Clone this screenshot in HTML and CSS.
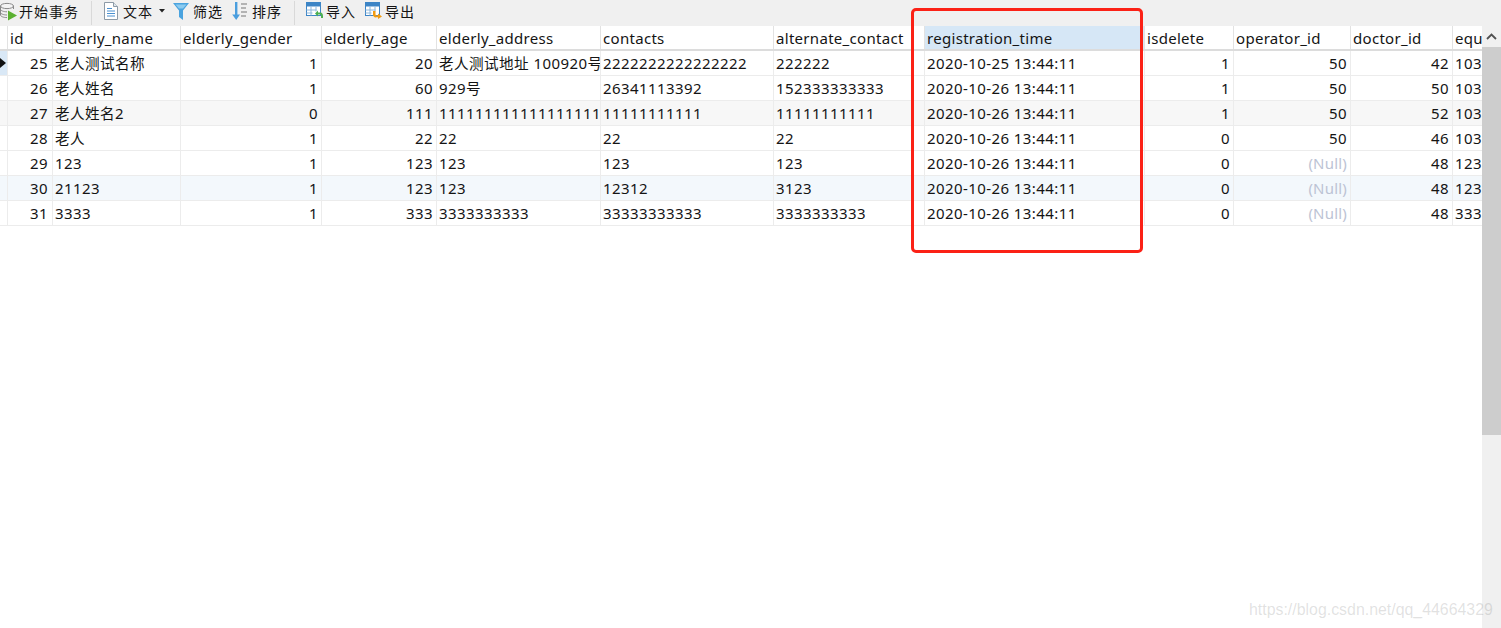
FILE: index.html
```html
<!DOCTYPE html>
<html lang="zh">
<head>
<meta charset="utf-8">
<title>elderly</title>
<link rel="stylesheet" href="styles.css">
</head>
<body>
<div class="toolbar">
  <div class="tool t-begin">
    <svg class="ic" width="18" height="20" viewBox="0 0 18 20"><ellipse cx="7" cy="5" rx="6.5" ry="2.6" fill="#f4f4f4" stroke="#8a8a8a"/><path d="M.5 5v9c0 1.4 3 2.6 6.500 2.600M13.500 5v3M.5 8.200c0 1.400 3 2.600 6.500 2.600M.5 11.400c0 1.400 3 2.600 6.500 2.600" fill="none" stroke="#8a8a8a"/><path d="M8 9.500l9 5-9 5z" fill="#5bb030"/></svg>
    <span>开始事务</span>
  </div>
  <div class="sep sep-a"></div>
  <div class="tool t-text">
    <svg class="ic" width="14" height="18" viewBox="0 0 14 18"><path d="M.5.5h9l4 4v13H.5z" fill="#fff" stroke="#8d9aa6"/><path d="M9.500.5v4h4" fill="#dfe6ec" stroke="#8d9aa6"/><path d="M3 6.500h5M3 9h8M3 11.500h8M3 14h8" stroke="#4a90d0"/></svg>
    <span>文本</span>
    <svg class="caret" width="6" height="4" viewBox="0 0 6 4"><path d="M0 0h6L3 3.500z" fill="#222"/></svg>
  </div>
  <div class="tool t-filter">
    <svg class="ic" width="16" height="18" viewBox="0 0 16 18"><path d="M0 1h16l-6 7.500V18l-4-3V8.500z" fill="#4aa3df"/><path d="M2.500 2.500h11L10 6.500H6z" fill="#8ccbf0"/></svg>
    <span>筛选</span>
  </div>
  <div class="tool t-sort">
    <svg class="ic" width="16" height="18" viewBox="0 0 16 18"><path d="M4 0h2.400v12.500H9L5.200 18 1.200 12.500H4z" fill="#4a9ede"/><path d="M10 2h6M10 6h5M10 10h6M10 14h5" stroke="#777" stroke-width="1.200"/></svg>
    <span>排序</span>
  </div>
  <div class="sep sep-b"></div>
  <div class="tool t-import">
    <svg class="ic" width="17" height="17" viewBox="0 0 17 17"><rect x=".5" y=".5" width="14" height="13" fill="#fff" stroke="#3d85c6"/><path d="M.5 1h14v3.500H.5z" fill="#3d85c6"/><path d="M5 4.500v9M10 4.500v5M.5 8h10M.5 11h6" stroke="#8fb8dc"/><path d="M9 11.500l3-3v2h2.500c1.500 0 2.500 1.500 2.500 3.500v2h-2v-1.800c0-1-.5-1.700-1.500-1.700H12v2z" fill="#4caf50"/></svg>
    <span>导入</span>
  </div>
  <div class="tool t-export">
    <svg class="ic" width="17" height="17" viewBox="0 0 17 17"><rect x=".5" y=".5" width="14" height="13" fill="#fff" stroke="#3d85c6"/><path d="M.5 1h14v3.500H.5z" fill="#3d85c6"/><path d="M5 4.500v9M10 4.500v5M.5 8h10M.5 11h6" stroke="#8fb8dc"/><path d="M8 9h2.500v3c0 1 .5 1.500 1.500 1.500h1v-2l4 3-4 2.500v-1.700h-1.500C9.500 15.800 8 14.500 8 12.500z" fill="#f39c12"/></svg>
    <span>导出</span>
  </div>
</div>

<div class="main">
  <div class="grid">
    <div class="row head">
      <div class="c gut"></div>
      <div class="c">id</div>
      <div class="c">elderly_name</div>
      <div class="c">elderly_gender</div>
      <div class="c">elderly_age</div>
      <div class="c">elderly_address</div>
      <div class="c">contacts</div>
      <div class="c">alternate_contact</div>
      <div class="c sel">registration_time</div>
      <div class="c">isdelete</div>
      <div class="c">operator_id</div>
      <div class="c">doctor_id</div>
      <div class="c last">equ</div>
    </div>

    <div class="row">
      <div class="c gut cur"><svg width="6" height="10" viewBox="0 0 6 10"><path d="M0 0l6 5-6 5z" fill="#111"/></svg></div>
      <div class="c n nid">25</div>
      <div class="c"><span class="cjk">老人测试名称</span></div>
      <div class="c n">1</div>
      <div class="c n">20</div>
      <div class="c"><span class="cjk">老人测试地址</span> 100920<span class="cjk">号</span></div>
      <div class="c">2222222222222222</div>
      <div class="c">222222</div>
      <div class="c">2020-10-25 13:44:11</div>
      <div class="c n">1</div>
      <div class="c n">50</div>
      <div class="c n">42</div>
      <div class="c last">103</div>
    </div>

    <div class="row">
      <div class="c gut"></div>
      <div class="c n nid">26</div>
      <div class="c"><span class="cjk">老人姓名</span></div>
      <div class="c n">1</div>
      <div class="c n">60</div>
      <div class="c">929<span class="cjk">号</span></div>
      <div class="c">26341113392</div>
      <div class="c">152333333333</div>
      <div class="c">2020-10-26 13:44:11</div>
      <div class="c n">1</div>
      <div class="c n">50</div>
      <div class="c n">50</div>
      <div class="c last">103</div>
    </div>

    <div class="row alt">
      <div class="c gut"></div>
      <div class="c n nid">27</div>
      <div class="c"><span class="cjk">老人姓名</span>2</div>
      <div class="c n">0</div>
      <div class="c n">111</div>
      <div class="c">111111111111111111</div>
      <div class="c">11111111111</div>
      <div class="c">11111111111</div>
      <div class="c">2020-10-26 13:44:11</div>
      <div class="c n">1</div>
      <div class="c n">50</div>
      <div class="c n">52</div>
      <div class="c last">103</div>
    </div>

    <div class="row">
      <div class="c gut"></div>
      <div class="c n nid">28</div>
      <div class="c"><span class="cjk">老人</span></div>
      <div class="c n">1</div>
      <div class="c n">22</div>
      <div class="c">22</div>
      <div class="c">22</div>
      <div class="c">22</div>
      <div class="c">2020-10-26 13:44:11</div>
      <div class="c n">0</div>
      <div class="c n">50</div>
      <div class="c n">46</div>
      <div class="c last">103</div>
    </div>

    <div class="row">
      <div class="c gut"></div>
      <div class="c n nid">29</div>
      <div class="c">123</div>
      <div class="c n">1</div>
      <div class="c n">123</div>
      <div class="c">123</div>
      <div class="c">123</div>
      <div class="c">123</div>
      <div class="c">2020-10-26 13:44:11</div>
      <div class="c n">0</div>
      <div class="c n null">(Null)</div>
      <div class="c n">48</div>
      <div class="c last">123</div>
    </div>

    <div class="row hover">
      <div class="c gut"></div>
      <div class="c n nid">30</div>
      <div class="c">21123</div>
      <div class="c n">1</div>
      <div class="c n">123</div>
      <div class="c">123</div>
      <div class="c">12312</div>
      <div class="c">3123</div>
      <div class="c">2020-10-26 13:44:11</div>
      <div class="c n">0</div>
      <div class="c n null">(Null)</div>
      <div class="c n">48</div>
      <div class="c last">123</div>
    </div>

    <div class="row">
      <div class="c gut"></div>
      <div class="c n nid">31</div>
      <div class="c">3333</div>
      <div class="c n">1</div>
      <div class="c n">333</div>
      <div class="c">3333333333</div>
      <div class="c">33333333333</div>
      <div class="c">3333333333</div>
      <div class="c">2020-10-26 13:44:11</div>
      <div class="c n">0</div>
      <div class="c n null">(Null)</div>
      <div class="c n">48</div>
      <div class="c last">333</div>
    </div>
  </div>

  <div class="scrollbar">
    <div class="sb-up"><svg width="11" height="7" viewBox="0 0 11 7"><path d="M1 6l4.500-4.500L10 6" fill="none" stroke="#505050" stroke-width="1.800"/></svg></div>
    <div class="sb-thumb"></div>
  </div>
</div>

<div class="redbox"></div>
<div class="watermark">https://blog.csdn.net/qq_44664329</div>
</body>
</html>
```
FILE: styles.css
```css
* { box-sizing: border-box; }
html, body { margin: 0; height: 628px; overflow: hidden; background: #fff; }
body {
  position: relative;
  font-family: "Noto Sans", "Noto Sans CJK SC", sans-serif;
  font-size: 15px;
  letter-spacing: .42px;
  color: #141414;
}
.toolbar {
  display: flex;
  align-items: center;
  height: 26px;
  padding-bottom: 5px;
  background: #f0f0f0;
  overflow: hidden;
  white-space: nowrap;
}
.tool { display: flex; align-items: center; flex: none; }
.tool span { font-family: "Noto Sans CJK SC", sans-serif; font-size: 14px; letter-spacing: 1px; }
.ic { flex: none; }
.caret { margin-left: 1px; }
.sep { flex: none; width: 1px; height: 24px; margin-top: 5px; background: #d9d9d9; }
.t-begin { gap: 1px; }
.sep-a { margin-left: 12px; }
.t-text { margin-left: 12px; gap: 5px; }
.t-filter { margin-left: 8px; gap: 4px; }
.t-sort { margin-left: 8px; gap: 5px; }
.sep-b { margin-left: 12px; }
.t-import { margin-left: 11px; gap: 3px; }
.t-export { margin-left: 9px; gap: 3px; }

.main { display: flex; align-items: stretch; height: 602px; }
.grid { width: 1482px; flex: none; }
.row {
  display: grid;
  grid-template-columns: 8px 45px 128px 141px 115px 164px 173px 151px 220px 89px 117px 102px 29px;
  height: 25px;
}
.head { height: 25px; border-bottom: 2px solid #dcdcdc; letter-spacing: .3px; }
.c {
  padding: 0 3px 0 2px;
  line-height: 25px;
  border-right: 1px solid #ececec;
  border-bottom: 1px solid #ececec;
  overflow: hidden;
  white-space: nowrap;
}
.head .c { border-bottom: 0; border-right-color: #e2e2e2; line-height: 24px; }
.n { text-align: right; padding-right: 3px; }
.nid { padding-right: 4px; }
.last { border-right: 0; padding-right: 0; }
.gut { padding: 0; }
.cur { background: #d9e8f6; display: flex; align-items: center; }
.sel { background: #d6e7f6; }
.alt { background: #f7f7f7; }
.hover { background: #f3f8fc; }
.null { color: #bcc3d4; letter-spacing: .2px; }
.cjk { font-family: "Noto Sans CJK SC", sans-serif; font-size: 14.6px; line-height: 1; }

.scrollbar { flex: none; width: 19px; background: #f0f0f0; }
.sb-up { height: 21px; display: flex; align-items: center; justify-content: center; }
.sb-thumb { height: 388px; background: #cdcdcd; }

.redbox {
  position: absolute;
  left: 911px;
  top: 8px;
  width: 232px;
  height: 245px;
  border: 3px solid #fb2116;
  border-radius: 5px;
}
.watermark {
  position: absolute;
  left: 1249px;
  top: 601px;
  font-family: "Liberation Sans", sans-serif;
  font-size: 15.9px;
  letter-spacing: 0;
  color: rgba(120,120,120,.22);
  white-space: nowrap;
}
```
